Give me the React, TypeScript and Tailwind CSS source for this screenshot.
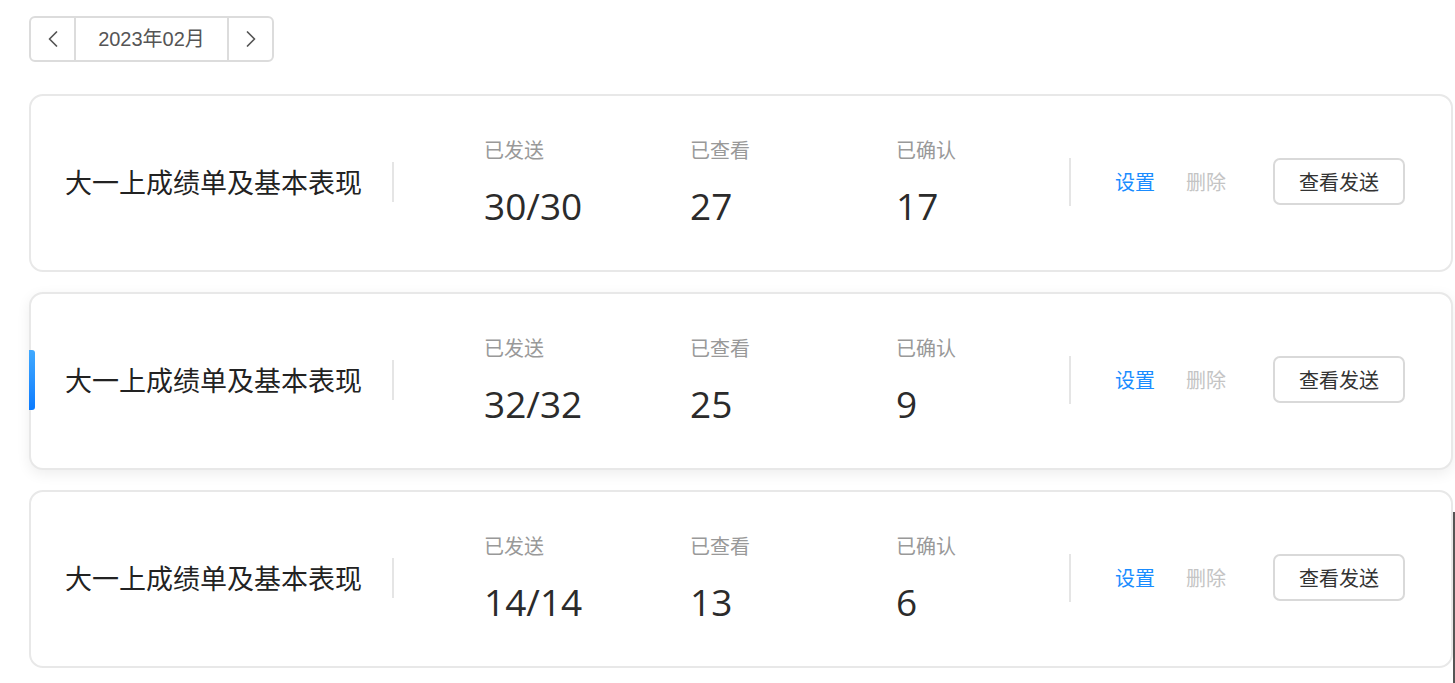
import { ChevronLeft, ChevronRight } from "lucide-react";

const cjk = "font-['Noto_Sans_CJK_SC','Noto_Sans',sans-serif]";
const num = "font-['Open_Sans','Noto_Sans_CJK_SC',sans-serif]";

const rows = [
  { title: "大一上成绩单及基本表现", sent: "30/30", viewed: "27", confirmed: "17", active: false },
  { title: "大一上成绩单及基本表现", sent: "32/32", viewed: "25", confirmed: "9", active: true },
  { title: "大一上成绩单及基本表现", sent: "14/14", viewed: "13", confirmed: "6", active: false },
];

function Stat({ label, value }: { label: string; value: string }) {
  return (
    <div className="w-[206px] flex flex-col">
      <div className={`${cjk} text-[20px] leading-[24px] text-[#999]`}>{label}</div>
      <div className={`${num} text-[37px] leading-[44px] text-[#2b2b2b] mt-[22px]`}>{value}</div>
    </div>
  );
}

export default function App() {
  return (
    <div className="relative min-h-[683px] bg-white pl-[29px] pr-[2px] pt-[16px]">
      {/* month switcher */}
      <div className="flex h-[46px] w-[245px] border-2 border-[#dcdcdc] rounded-[6px] text-[#555]">
        <button className="w-[45px] flex items-center justify-center border-r-2 border-[#dcdcdc]">
          <ChevronLeft size={28} strokeWidth={1.5} />
        </button>
        <div className="flex-1 flex items-center justify-center font-['Liberation_Sans','Noto_Sans_CJK_SC',sans-serif] text-[20px]">
          2023年02月
        </div>
        <button className="w-[45px] flex items-center justify-center border-l-2 border-[#dcdcdc]">
          <ChevronRight size={28} strokeWidth={1.5} />
        </button>
      </div>

      <div className="mt-[32px] flex flex-col gap-[20px]">
        {rows.map((r, i) => (
          <div
            key={i}
            className={`relative h-[178px] pb-[3px] flex items-center border-2 border-[#e8e8e8] rounded-[14px] bg-white ${
              r.active ? "shadow-[0_4px_14px_rgba(0,0,0,0.07)]" : ""
            }`}
          >
            {r.active && (
              <div className="absolute left-[-2px] top-[56px] w-[6px] h-[60px] rounded-r-[3px] bg-gradient-to-b from-[#40a9ff] to-[#0a7bff]" />
            )}
            <div className="w-[363px] pl-[34px] flex items-center">
              <div className={`${cjk} text-[27px] leading-[36px] text-[#222] w-[329px]`}>{r.title}</div>
              <div className="w-[2px] h-[40px] bg-[#e5e5e5]" />
            </div>
            <div className="flex pl-[90px] pt-[3px]">
              <Stat label="已发送" value={r.sent} />
              <Stat label="已查看" value={r.viewed} />
              <Stat label="已确认" value={r.confirmed} />
            </div>
            <div className="w-[2px] h-[48px] bg-[#e5e5e5] ml-[-33px]" />
            <div className={`${cjk} flex items-center text-[20px] ml-[44px]`}>
              <span className="text-[#1a8cff]">设置</span>
              <span className="text-[#c4c4c4] ml-[31px]">删除</span>
              <button className="ml-[47px] w-[132px] h-[47px] border-2 border-[#d9d9d9] rounded-[7px] text-[#333]">
                查看发送
              </button>
            </div>
          </div>
        ))}
      </div>

      <div className="absolute right-0 top-[512px] bottom-0 w-[2px] bg-[#555]" />
    </div>
  );
}
